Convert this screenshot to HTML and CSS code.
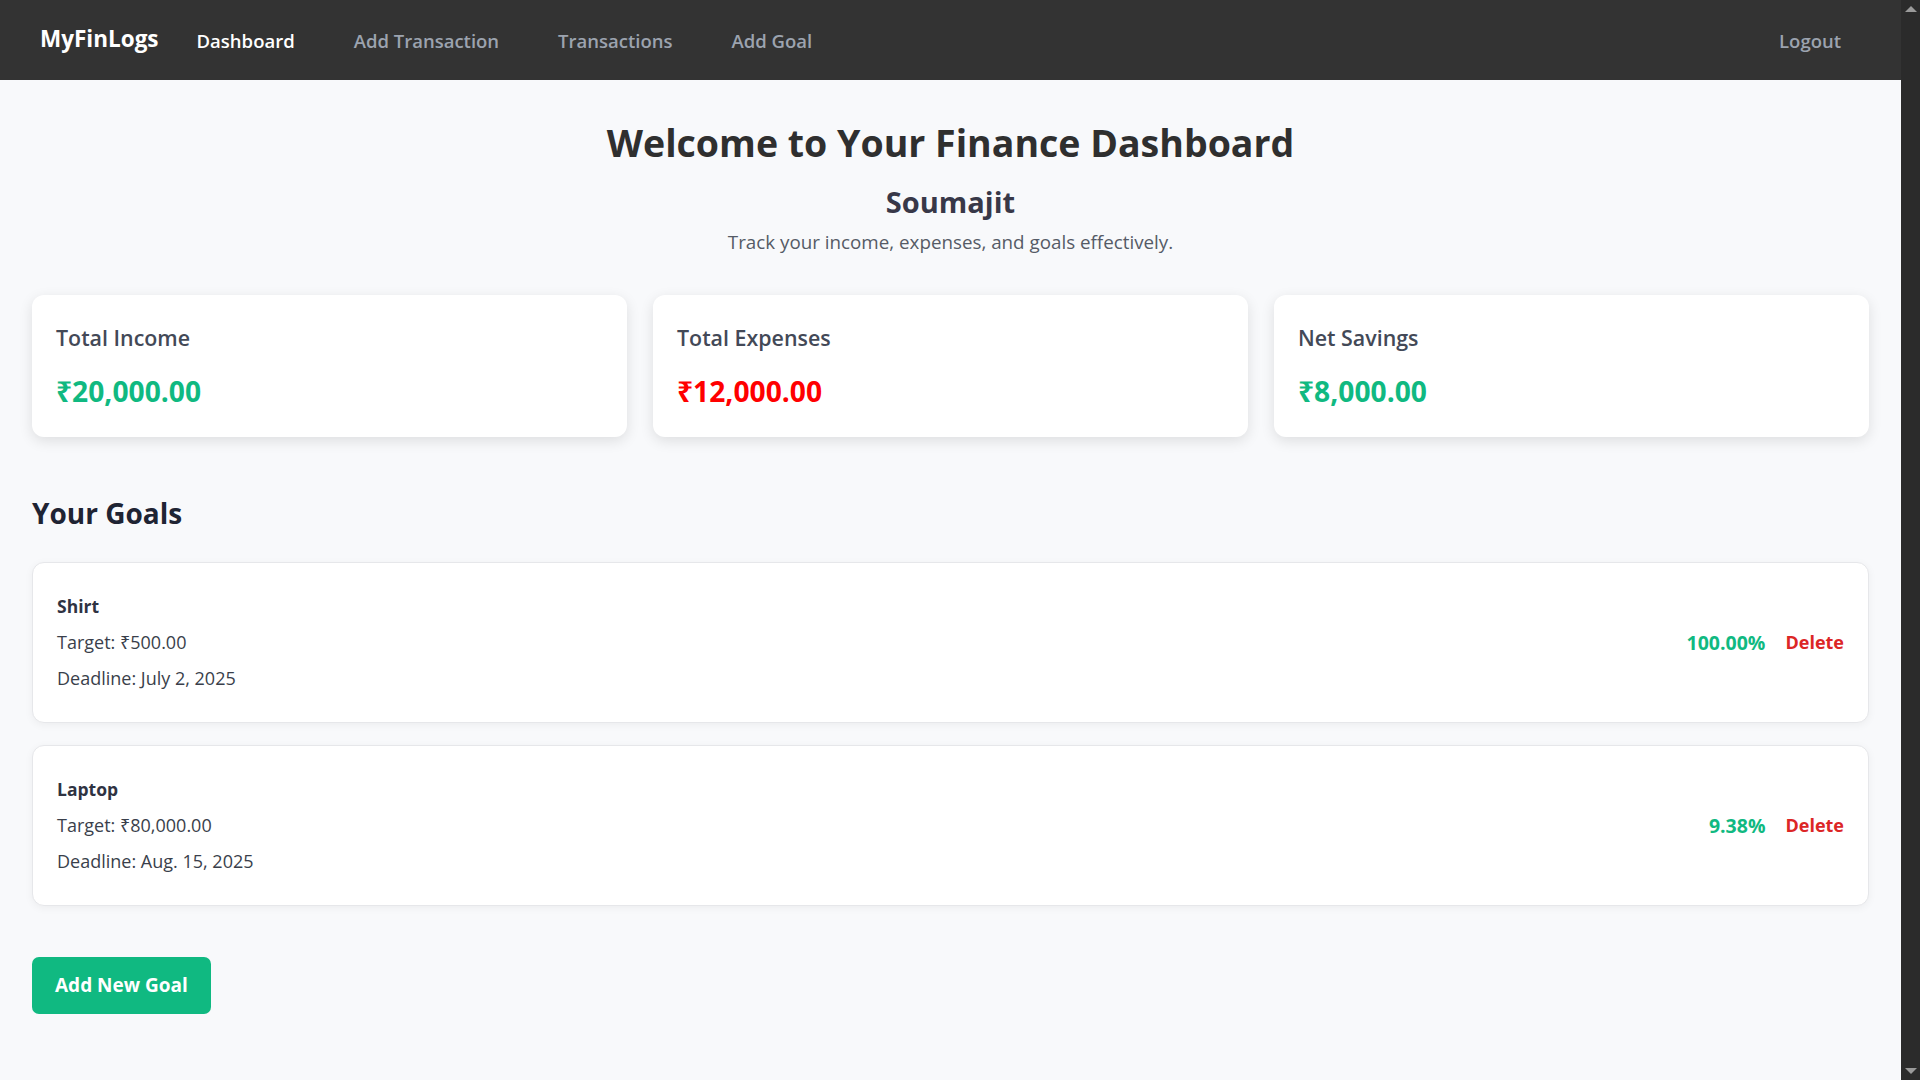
FILE: index.html
```html
<!DOCTYPE html>
<html lang="en">
<head>
<meta charset="utf-8">
<title>MyFinLogs - Dashboard</title>
<link rel="stylesheet" href="styles.css">
</head>
<body>
<div class="viewport">
  <div class="page">
    <nav class="navbar">
      <div class="nav-left">
        <a class="brand" href="#">MyFinLogs</a>
        <div class="nav-links">
          <a class="nav-link active" href="#">Dashboard</a>
          <a class="nav-link" href="#">Add Transaction</a>
          <a class="nav-link" href="#">Transactions</a>
          <a class="nav-link" href="#">Add Goal</a>
        </div>
      </div>
      <a class="nav-link logout" href="#">Logout</a>
    </nav>

    <main class="main">
      <section class="hero">
        <h1 class="hero-title">Welcome to Your Finance Dashboard</h1>
        <h2 class="hero-name">Soumajit</h2>
        <p class="hero-sub">Track your income, expenses, and goals effectively.</p>
      </section>

      <section class="stats">
        <div class="stat-card">
          <h3 class="stat-title">Total Income</h3>
          <p class="stat-value green">₹20,000.00</p>
        </div>
        <div class="stat-card">
          <h3 class="stat-title">Total Expenses</h3>
          <p class="stat-value red">₹12,000.00</p>
        </div>
        <div class="stat-card">
          <h3 class="stat-title">Net Savings</h3>
          <p class="stat-value green">₹8,000.00</p>
        </div>
      </section>

      <h2 class="section-title">Your Goals</h2>

      <section class="goals">
        <div class="goal-card">
          <div class="goal-info">
            <p class="goal-name">Shirt</p>
            <p class="goal-line">Target: ₹500.00</p>
            <p class="goal-line">Deadline: July 2, 2025</p>
          </div>
          <div class="goal-actions">
            <span class="goal-pct">100.00%</span>
            <a class="goal-delete" href="#">Delete</a>
          </div>
        </div>
        <div class="goal-card">
          <div class="goal-info">
            <p class="goal-name">Laptop</p>
            <p class="goal-line">Target: ₹80,000.00</p>
            <p class="goal-line">Deadline: Aug. 15, 2025</p>
          </div>
          <div class="goal-actions">
            <span class="goal-pct">9.38%</span>
            <a class="goal-delete" href="#">Delete</a>
          </div>
        </div>
      </section>

      <a class="btn-add" href="#">Add New Goal</a>
    </main>
  </div>
  <div class="scrollbar">
    <span class="arrow up"></span>
    <span class="arrow down"></span>
  </div>
</div>
</body>
</html>
```

FILE: styles.css
```css
* { box-sizing: border-box; }

html, body {
  margin: 0;
  padding: 0;
  height: 100%;
  overflow: hidden;
}

body {
  font-family: "Open Sans", "Noto Sans", sans-serif;
  background: #f8f9fb;
  color: #333;
}

a { text-decoration: none; }
p, h1, h2, h3 { margin: 0; }

.viewport {
  display: flex;
  height: 100vh;
}

.page {
  flex: 1;
  min-width: 0;
  background: #f8f9fb;
}

.scrollbar {
  width: 19px;
  background: #2b2b2b;
  display: flex;
  flex-direction: column;
  justify-content: space-between;
  align-items: center;
  padding: 6px 0;
}

.arrow {
  width: 0;
  height: 0;
  border-left: 6px solid transparent;
  border-right: 6px solid transparent;
}
.arrow.up { border-bottom: 6px solid #9a9a9a; }
.arrow.down { border-top: 6px solid #9a9a9a; }

/* navbar */
.navbar {
  height: 80px;
  background: #333333;
  display: flex;
  align-items: center;
  justify-content: space-between;
  padding: 0 40px;
}

.nav-left {
  display: flex;
  align-items: center;
}

.brand {
  color: #fff;
  font-weight: 700;
  font-size: 22.5px;
  margin-right: 38px;
  margin-top: -3px;
}

.nav-links {
  display: flex;
  gap: 59px;
}

.nav-link {
  color: #9ca3af;
  font-size: 18.5px;
  font-weight: 600;
}

.nav-link.active { color: #fff; }

.logout { margin-right: 20px; }

/* main */
.main {
  padding: 0 32px 32px;
}

.hero {
  text-align: center;
}

.hero-title {
  margin-top: 43px;
  font-size: 37.5px;
  line-height: 40px;
  font-weight: 700;
  color: #2f2f2f;
}

.hero-name {
  margin-top: 21px;
  font-size: 29px;
  line-height: 36px;
  font-weight: 700;
  color: #383848;
}

.hero-sub {
  margin-top: 8px;
  font-size: 18.8px;
  line-height: 28px;
  color: #555b66;
}

.stats {
  margin-top: 39px;
  display: grid;
  grid-template-columns: repeat(3, 1fr);
  gap: 26px;
}

.stat-card {
  background: #fff;
  border-radius: 12px;
  box-shadow: 0 4px 14px rgba(0, 0, 0, 0.11);
  padding: 29px 24px 28px;
  height: 142px;
}

.stat-title {
  font-size: 21.4px;
  line-height: 28px;
  font-weight: 600;
  color: #434957;
}

.stat-value {
  margin-top: 21px;
  font-size: 28.2px;
  line-height: 36px;
  font-weight: 700;
}

.green { color: #10b981; }
.red { color: #ff0000; }

.section-title {
  margin-top: 58px;
  font-size: 28px;
  line-height: 36px;
  font-weight: 700;
  color: #1f2433;
}

.goals {
  margin-top: 31px;
  display: flex;
  flex-direction: column;
  gap: 22px;
}

.goal-card {
  background: #fff;
  border: 1px solid #e6e7ea;
  border-radius: 12px;
  box-shadow: 0 2px 8px rgba(0, 0, 0, 0.05);
  padding: 29px 24px 30px;
  display: flex;
  align-items: center;
  justify-content: space-between;
}

.goal-info {
  display: flex;
  flex-direction: column;
  gap: 8px;
}

.goal-name {
  font-size: 17.5px;
  line-height: 28px;
  font-weight: 700;
  color: #2f3342;
}

.goal-line {
  font-size: 18px;
  line-height: 28px;
  color: #3a3f4b;
}

.goal-actions {
  display: flex;
  align-items: center;
  gap: 20px;
}

.goal-pct {
  font-size: 19.5px;
  font-weight: 700;
  color: #10b981;
}

.goal-delete {
  font-size: 18px;
  font-weight: 700;
  color: #dc2626;
}

.btn-add {
  display: inline-block;
  margin-top: 51px;
  background: #10b981;
  color: #fff;
  font-size: 19px;
  line-height: 28px;
  font-weight: 700;
  padding: 14px 23px 15px;
  border-radius: 7px;
}
```
